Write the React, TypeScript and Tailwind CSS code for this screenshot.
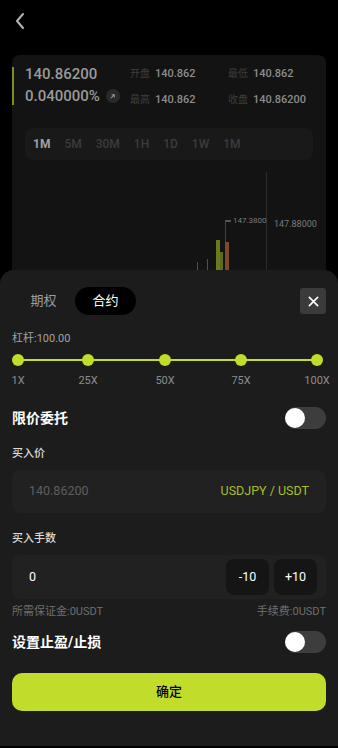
import React from 'react';

const font = { fontFamily: 'Roboto, "Noto Sans CJK SC", sans-serif' };

const stats = [
  ['开盘', '140.862'],
  ['最低', '140.862'],
  ['最高', '140.862'],
  ['收盘', '140.86200'],
];

const tabs = ['1M', '5M', '30M', '1H', '1D', '1W', '1M'];
const marks = [
  { label: '1X', cls: '' },
  { label: '25X', cls: 'ml-[58px]' },
  { label: '50X', cls: 'ml-[65px]' },
  { label: '75X', cls: 'ml-[64px]' },
  { label: '100X', cls: 'ml-[64px]' },
];

const Toggle = () => (
  <div className="w-[41px] h-[22px] rounded-full bg-[#3d3d3d] p-[2px] flex items-center">
    <div className="w-[20px] h-[20px] rounded-full bg-white -ml-[2px]" />
  </div>
);

export default function App() {
  return (
    <div className="w-[338px] h-[748px] bg-black overflow-hidden flex flex-col relative" style={font}>
      <div className="h-[55px] px-[12px] pt-[12px]">
        <svg width="12" height="18" viewBox="0 0 12 18" className="ml-[2px]">
          <path d="M9 2 L3 9 L9 16" fill="none" stroke="#b5b5b5" strokeWidth="2" strokeLinecap="round" strokeLinejoin="round" />
        </svg>
      </div>

      <div className="mx-[12px] h-[230px] rounded-t-[8px] bg-[#131313] pt-[12px]">
        <div className="flex border-l-[2px] border-[#7d8d1e] pl-[11px] pr-[10px] h-[38px]">
          <div className="w-[105px] flex flex-col justify-between -mt-[2px]">
            <div className="text-[15px] leading-[18px] font-medium text-[#9a9a9a]">140.86200</div>
            <div className="flex items-center gap-[6px]">
              <span className="text-[15px] leading-[18px] font-medium text-[#9a9a9a]">0.040000%</span>
              <span className="w-[14px] h-[14px] rounded-full bg-[#2a2a2a] flex items-center justify-center">
                <svg width="7" height="7" viewBox="0 0 8 8">
                  <path d="M2 6 L6 2 M3 2 H6 V5" fill="none" stroke="#9a9a9a" strokeWidth="1.2" />
                </svg>
              </span>
            </div>
          </div>
          <div className="grid grid-cols-[98px_1fr] gap-y-[12px] text-[11px] leading-[14px]">
            {stats.map(([k, v], i) => (
              <div key={i} className="flex gap-[5px] items-center">
                <span className="text-[#3e3e3e] text-[10px]">{k}</span>
                <span className="text-[#8c8c8c] font-medium">{v}</span>
              </div>
            ))}
          </div>
        </div>

        <div className="mx-[13px] mt-[23px] h-[32px] rounded-[8px] bg-[#191919] flex items-center pl-[8px] gap-[14px] text-[12px] font-medium text-[#3c3c3c]">
          {tabs.map((t, i) => (
            <span key={i} className={i === 0 ? 'text-[#a0a0a0] font-bold' : ''}>{t}</span>
          ))}
        </div>

        <div className="relative h-[120px]">
          <div className="absolute left-[254px] top-[12px] w-px h-[110px] bg-[#2c2c2c]" />
          <div className="absolute left-[221px] top-[55px] text-[8px] text-[#7b7b7b]">147.3800</div>
          <div className="absolute left-[262px] top-[58px] text-[9px] text-[#7b7b7b]">147.88000</div>
          <div className="absolute left-[213px] top-[60px] w-[6px] h-[2px] bg-[#555]" />
          <div className="absolute left-[213px] top-[61px] w-px h-[50px] bg-[#5a3a2a]" />
          <div className="absolute left-[213px] top-[82px] w-[4px] h-[30px] bg-[#7b4b2b]" />
          <div className="absolute left-[204px] top-[80px] w-[4px] h-[32px] bg-[#6a7a1c]" />
          <div className="absolute left-[208px] top-[92px] w-[3px] h-[20px] bg-[#5c6c18]" />
          <div className="absolute left-[195px] top-[99px] w-px h-[13px] bg-[#4d5a16]" />
          <div className="absolute left-[185px] top-[102px] w-px h-[10px] bg-[#4d5a16]" />
        </div>
      </div>

      <div className="absolute left-0 right-0 top-[270px] h-[476px] rounded-t-[14px] bg-[#1c1c1c] px-[12px] pt-[17px]">
        <div className="flex items-center justify-between h-[28px]">
          <div className="flex items-center text-[13px]">
            <span className="w-[63px] text-center text-[#9d9d9d]">期权</span>
            <span className="w-[61px] h-[28px] rounded-full bg-black text-white flex items-center justify-center">合约</span>
          </div>
          <div className="w-[26px] h-[26px] rounded-[3px] bg-[#3b3b3b] flex items-center justify-center">
            <svg width="11" height="11" viewBox="0 0 12 12">
              <path d="M1.5 1.5 L10.5 10.5 M10.5 1.5 L1.5 10.5" stroke="#fff" strokeWidth="1.8" strokeLinecap="round" />
            </svg>
          </div>
        </div>

        <div className="mt-[17px] text-[11px] leading-[14px] text-[#a2a2a2]">杠杆:100.00</div>

        <div className="relative mt-[8px]">
          <div className="absolute left-[6px] right-[8px] top-[5px] h-[2px] bg-[#c2dc2c]" />
          <div className="flex relative">
            {marks.map((m) => (
              <div key={m.label} className={`w-[12px] flex flex-col items-center ${m.cls}`}>
                <div className="w-[12px] h-[12px] rounded-full bg-[#c2dc2c]" />
                <span className="mt-[8px] text-[11px] leading-[14px] text-[#8c8c8c] whitespace-nowrap">{m.label}</span>
              </div>
            ))}
          </div>
        </div>

        <div className="mt-[19px] flex items-center justify-between">
          <span className="text-[14px] font-bold text-white">限价委托</span>
          <Toggle />
        </div>

        <div className="mt-[18px] text-[11px] leading-[14px] font-medium text-[#dcdcdc]">买入价</div>
        <div className="mt-[9px] h-[43px] rounded-[8px] bg-[#212121] flex items-center justify-between px-[17px] text-[12.5px]">
          <span className="text-[#5f5f5f]">140.86200</span>
          <span className="text-[#a8bf2c]">USDJPY / USDT</span>
        </div>

        <div className="mt-[19px] text-[11px] leading-[14px] font-medium text-[#dcdcdc]">买入手数</div>
        <div className="mt-[9px] h-[44px] rounded-[8px] bg-[#212121] flex items-center justify-between pl-[17px] pr-[9px]">
          <span className="text-[12.5px] text-white">0</span>
          <div className="flex gap-[5px]">
            <button className="w-[43px] h-[36px] rounded-[8px] bg-[#151515] text-[12.5px] text-white">-10</button>
            <button className="w-[43px] h-[36px] rounded-[8px] bg-[#151515] text-[12.5px] text-white">+10</button>
          </div>
        </div>
        <div className="mt-[6px] flex justify-between text-[11px] leading-[14px] text-[#6f6f6f]">
          <span>所需保证金:0USDT</span>
          <span>手续费:0USDT</span>
        </div>

        <div className="mt-[12px] flex items-center justify-between">
          <span className="text-[14px] font-bold text-white">设置止盈/止损</span>
          <Toggle />
        </div>

        <button className="mt-[20px] w-full h-[38px] rounded-[10px] bg-[#c2dc2c] text-[13px] font-medium text-black">确定</button>
      </div>
    </div>
  );
}
